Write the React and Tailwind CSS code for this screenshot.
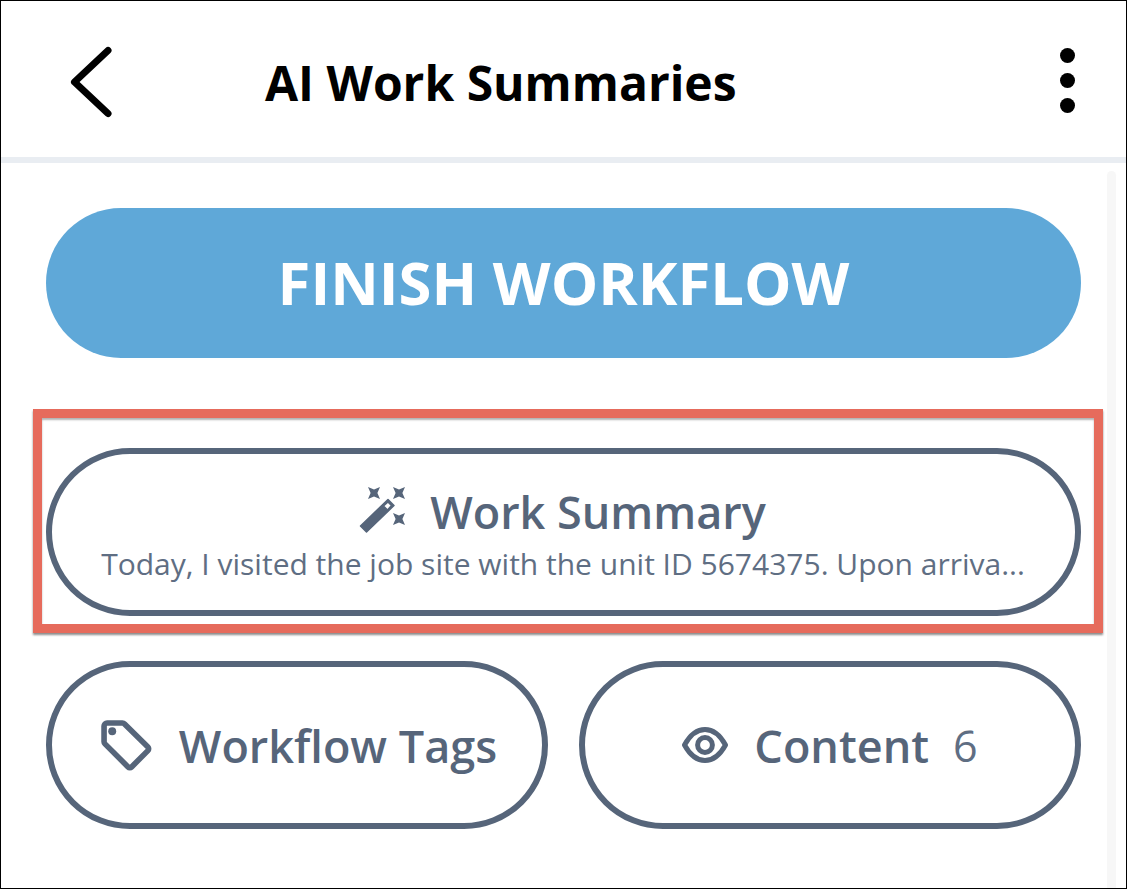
function BackIcon() {
  return (
    <svg width="46" height="76" viewBox="0 0 46 76" fill="none" stroke="#000" strokeWidth="7" strokeLinecap="round" strokeLinejoin="round" className="mt-[6px] shrink-0">
      <path d="M40 6.5 L6.5 38 L40 69.5" />
    </svg>
  );
}

function WandIcon() {
  const star = "M-6 -6 L0 -3.4 L6 -6 L3.4 0 L6 6 L0 3.4 L-6 6 L-3.4 0z";
  return (
    <svg width="50" height="48" viewBox="0 0 50 48" fill="#56657a" className="shrink-0">
      <path d={star} transform="translate(15 6)" />
      <path d={star} transform="translate(40 6)" />
      <path d={star} transform="translate(40 32)" />
      <path
        fillRule="evenodd"
        stroke="#56657a"
        strokeWidth="1.5"
        strokeLinejoin="round"
        d="M1.5 39 L29 12.5 L35 18.5 L7.5 45z M24.5 19 L29 15 L32.5 18.5 L28.5 23z"
      />
    </svg>
  );
}

function TagIcon() {
  return (
    <svg width="51" height="51" viewBox="0 0 50 50" fill="none" stroke="#56657a" strokeWidth="5.5" strokeLinejoin="round" className="shrink-0">
      <path d="M3 6 a3 3 0 0 1 3 -3 H21 a3 3 0 0 1 2.1 .9 L46 26.5 a2.5 2.5 0 0 1 0 3.5 L30 46 a2.5 2.5 0 0 1 -3.5 0 L3.9 23.4 a3 3 0 0 1 -.9 -2.1z" />
      <circle cx="11" cy="11" r="3.9" fill="#56657a" stroke="none" />
    </svg>
  );
}

function EyeIcon() {
  return (
    <svg width="46" height="36" viewBox="0 0 46 36" fill="none" stroke="#56657a" strokeWidth="5" strokeLinejoin="round" className="shrink-0">
      <path d="M2.5 18 C8 8 15 2.5 23 2.5 S38 8 43.5 18 C38 28 31 33.5 23 33.5 S8 28 2.5 18Z" />
      <circle cx="23" cy="18" r="7.4" />
    </svg>
  );
}

export default function App() {
  return (
    <div className="w-[1127px] h-[889px] bg-white border border-black overflow-hidden font-['Open_Sans',sans-serif]">
      <header className="h-[156px] flex items-center pl-[67px] pr-[51px]">
        <BackIcon />
        <h1 className="ml-[151px] text-[48px] leading-none font-bold text-black mt-[8px]">AI Work Summaries</h1>
        <div className="ml-auto flex flex-col gap-[10px] mt-[2px]">
          <span className="block w-[15px] h-[15px] rounded-full bg-black"></span>
          <span className="block w-[15px] h-[15px] rounded-full bg-black"></span>
          <span className="block w-[15px] h-[15px] rounded-full bg-black"></span>
        </div>
      </header>
      <div className="h-[6px] bg-[#e9edf2]"></div>

      <div className="flex">
        <main className="w-[1035px] ml-[45px] pt-[45px] flex flex-col">
          <button className="h-[150px] rounded-[75px] bg-[#5fa8d8] text-white text-[59.8px] font-bold leading-none">
            FINISH WORKFLOW
          </button>

          <div className="relative mt-[90px]">
            <div className="absolute top-[-39px] bottom-[-17px] left-[-13px] right-[-22px] border-[9px] border-[#e66b5c] shadow-[0_2px_2px_rgba(0,0,0,0.45),inset_0_2px_2px_rgba(0,0,0,0.3)]"></div>
            <button className="w-full h-[168px] rounded-[84px] border-[6px] border-[#56657a] flex flex-col items-center text-[#56657a]">
              <span className="flex items-center gap-[21px] mt-[22px] h-[70px] ml-[-2px]">
                <WandIcon />
                <span className="text-[45px] leading-none font-semibold">Work Summary</span>
              </span>
              <span className="text-[30px] leading-none mt-[3px] ml-[-1px] text-[#5f6e83]">
                Today, I visited the job site with the unit ID 5674375. Upon arriva...
              </span>
            </button>
          </div>

          <div className="flex gap-[31px] mt-[45px]">
            <button className="w-[502px] h-[168px] rounded-[84px] border-[6px] border-[#56657a] flex items-center justify-center gap-[27px] text-[#56657a] pl-[4px]">
              <TagIcon />
              <span className="text-[45px] leading-none font-semibold">Workflow Tags</span>
            </button>
            <button className="w-[502px] h-[168px] rounded-[84px] border-[6px] border-[#56657a] flex items-center justify-center gap-[26px] text-[#56657a]">
              <EyeIcon />
              <span className="text-[45px] leading-none font-semibold">Content</span>
              <span className="text-[43px] leading-none ml-[-2px] text-[#5f6e83]">6</span>
            </button>
          </div>
        </main>
        <div className="w-[9px] h-[720px] ml-[26px] mt-[8px] rounded-t-full bg-[#f7f7f7]"></div>
      </div>
    </div>
  );
}
